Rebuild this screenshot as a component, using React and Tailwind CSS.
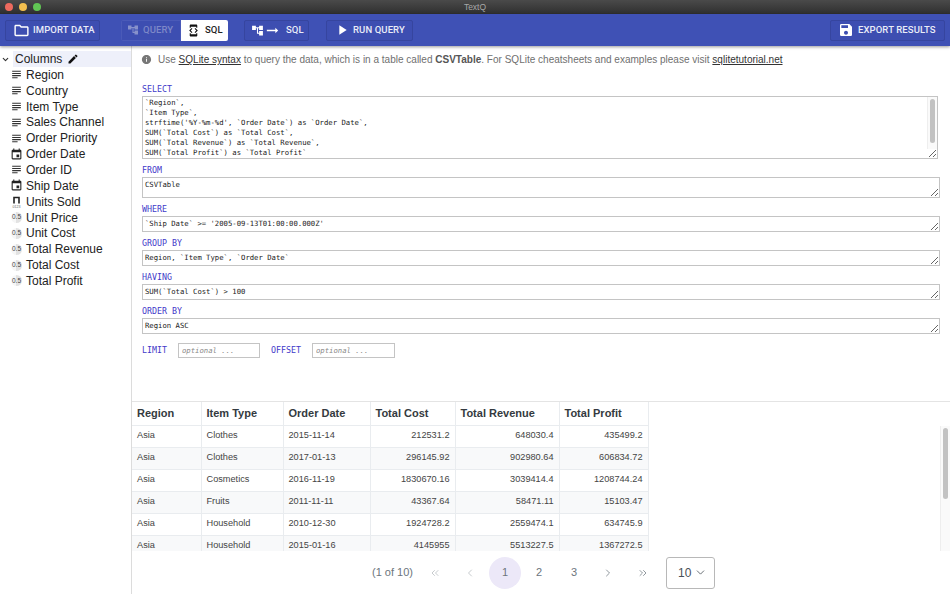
import React from "react";
import { ChevronDown, ChevronLeft, ChevronRight, ChevronsLeft, ChevronsRight } from "lucide-react";
import {
  MdAccountTree,
  MdArrowRightAlt,
  MdDeveloperMode,
  MdEdit,
  MdEvent,
  MdInfo,
  MdOutlineFolder,
  MdPlayArrow,
  MdSave,
  MdSubject,
} from "react-icons/md";

const columns = [
  { name: "Region", type: "text" },
  { name: "Country", type: "text" },
  { name: "Item Type", type: "text" },
  { name: "Sales Channel", type: "text" },
  { name: "Order Priority", type: "text" },
  { name: "Order Date", type: "date" },
  { name: "Order ID", type: "text" },
  { name: "Ship Date", type: "date" },
  { name: "Units Sold", type: "int" },
  { name: "Unit Price", type: "float" },
  { name: "Unit Cost", type: "float" },
  { name: "Total Revenue", type: "float" },
  { name: "Total Cost", type: "float" },
  { name: "Total Profit", type: "float" },
];

const rows = [
  ["Asia", "Clothes", "2015-11-14", "212531.2", "648030.4", "435499.2"],
  ["Asia", "Clothes", "2017-01-13", "296145.92", "902980.64", "606834.72"],
  ["Asia", "Cosmetics", "2016-11-19", "1830670.16", "3039414.4", "1208744.24"],
  ["Asia", "Fruits", "2011-11-11", "43367.64", "58471.11", "15103.47"],
  ["Asia", "Household", "2010-12-30", "1924728.2", "2559474.1", "634745.9"],
  ["Asia", "Household", "2015-01-16", "4145955", "5513227.5", "1367272.5"],
];

const selectSql = `\`Region\`,
\`Item Type\`,
strftime('%Y-%m-%d', \`Order Date\`) as \`Order Date\`,
SUM(\`Total Cost\`) as \`Total Cost\`,
SUM(\`Total Revenue\`) as \`Total Revenue\`,
SUM(\`Total Profit\`) as \`Total Profit\``;

const mono = "font-['DejaVu_Sans_Mono',monospace]";
const toolText = "font-['Roboto',sans-serif] text-[9.5px] font-medium tracking-[0.1px]";

const ColumnIcon = ({ type }) => {
  if (type === "date") return <MdEvent className="w-[13px] h-[13px] text-[#222]" />;
  if (type === "int") {
    return (
      <svg viewBox="0 0 13 13" className="w-[13px] h-[13px] text-[#222]">
        <path d="M4 8.5V2.5h5v6" fill="none" stroke="currentColor" strokeWidth="1.6" />
        <text x="6.5" y="12.8" textAnchor="middle" fontSize="3.6" fill="#666" fontFamily="Liberation Sans">0123</text>
      </svg>
    );
  }
  if (type === "float") {
    return (
      <span className="w-[11px] h-[11px] rounded-full bg-[linear-gradient(90deg,#f6f6f6_50%,#e2e2e2_50%)] flex items-center justify-center text-[6.5px] leading-none text-[#444]">
        0.5
      </span>
    );
  }
  return <MdSubject className="w-[13px] h-[13px] text-[#333]" />;
};

const ToolButton = ({ icon, children, className = "" }) => (
  <div className={`h-[21px] flex items-center whitespace-nowrap rounded-[2px] border border-[#36459f] bg-[#3d4eb1] text-[#e9ecf8] ${toolText} ${className}`}>
    {icon}
    {children}
  </div>
);

const SqlField = ({ label, rows: lineCount, value, heightClass, narrow }) => (
  <div>
    <div className={`h-[18px] pt-[4px] text-[8.3px] leading-[14px] text-[#3f39c9] ${mono}`}>{label}</div>
    <textarea
      readOnly
      rows={lineCount}
      value={value}
      className={`block ${narrow ? "w-[796px] py-[1px]" : "w-[798px] pt-[2px]"} ${heightClass} overflow-hidden bg-white border border-[#c4c4c4] px-[2px] text-[7.25px] leading-[10px] text-[#222] outline-none resize-y ${mono}`}
    />
  </div>
);

const PageButton = ({ children, className = "" }) => (
  <div className={`w-[32px] h-[32px] shrink-0 flex items-center justify-center rounded-full text-[#6c757d] ${className}`}>
    {children}
  </div>
);

const App = () => {
  return (
    <div className="w-[950px] h-[594px] flex flex-col overflow-hidden bg-white font-['Liberation_Sans',sans-serif]">
      {/* window title bar */}
      <div className="relative h-[14px] shrink-0 flex items-center justify-center bg-[linear-gradient(#4a4a4a,#2f2f2f)]">
        <div className="absolute left-[5px] top-[3px] flex gap-[6px]">
          <span className="w-[8px] h-[8px] rounded-full bg-[#ed6a5e]" />
          <span className="w-[8px] h-[8px] rounded-full bg-[#f4bf4f]" />
          <span className="w-[8px] h-[8px] rounded-full bg-[#61c554]" />
        </div>
        <span className="text-[8.5px] text-[#a8a8a8]">TextQ</span>
      </div>

      {/* toolbar */}
      <div className="relative z-10 h-[32px] shrink-0 flex items-center px-[5px] bg-[#3f51b5] shadow-[0_1px_3px_rgba(0,0,0,0.4)]">
        <ToolButton
          className="w-[95px] pl-[7px] gap-[3px]"
          icon={<MdOutlineFolder className="w-[17px] h-[17px] text-white" />}
        >
          IMPORT DATA
        </ToolButton>

        <div className="ml-[21px] h-[21px] flex rounded-[2px] overflow-hidden">
          <div className={`w-[60px] flex items-center pl-[5px] gap-[4px] border border-[#4a5ab8] bg-[#3d4eb1] text-[#7d88c8] ${toolText}`}>
            <MdAccountTree className="w-[12px] h-[12px] text-[#8791cb]" />
            QUERY
          </div>
          <div className={`w-[47px] flex items-center pl-[6px] gap-[5px] bg-white text-[#222] ${toolText}`}>
            <MdDeveloperMode className="w-[13px] h-[13px] text-[#111]" />
            SQL
          </div>
        </div>

        <ToolButton
          className="ml-[16px] w-[65px] pl-[6px]"
          icon={
            <span className="flex items-center mr-[5px]">
              <MdAccountTree className="w-[13px] h-[13px] text-white" />
              <MdArrowRightAlt className="w-[17px] h-[17px] text-white" />
            </span>
          }
        >
          SQL
        </ToolButton>

        <ToolButton
          className="ml-[17px] w-[87px] pl-[7px] gap-[3px]"
          icon={<MdPlayArrow className="w-[16px] h-[16px] text-white" />}
        >
          RUN QUERY
        </ToolButton>

        <ToolButton
          className="ml-auto w-[115px] pl-[7px] gap-[4px]"
          icon={<MdSave className="w-[16px] h-[16px] text-white" />}
        >
          EXPORT RESULTS
        </ToolButton>
      </div>

      <div className="flex-1 min-h-0 flex">
        {/* columns sidebar */}
        <div className="w-[132px] shrink-0 border-r border-[#dcdcdc] pt-[5px] text-[12px] text-[#222]">
          <div className="flex items-center h-[16px]">
            <ChevronDown className="w-[9px] h-[9px] ml-[1px] mr-[3px] text-[#333]" strokeWidth={3} />
            <div className="flex-1 h-[16px] flex items-center pl-[2px] gap-[5px] bg-[#eef0fa]">
              Columns
              <MdEdit className="w-[12px] h-[12px] text-[#111]" />
            </div>
          </div>
          {columns.map((col) => (
            <div key={col.name} className="flex items-center h-[15.85px] pl-[10px] gap-[3px]">
              <span className="w-[13px] flex justify-center">
                <ColumnIcon type={col.type} />
              </span>
              {col.name}
            </div>
          ))}
        </div>

        <div className="flex-1 min-w-0 flex flex-col">
          {/* query editor */}
          <div className="h-[355px] shrink-0 pl-[10px]">
            <div className="h-[26px] pt-[1px] flex items-center gap-[6px] text-[10.03px] text-[#6f6f6f]">
              <MdInfo className="ml-[-1px] w-[11px] h-[11px] text-[#777]" />
              <span>
                Use <span className="underline text-[#333]">SQLite syntax</span> to query the data, which is in a table called{" "}
                <span className="font-bold text-[#555]">CSVTable</span>. For SQLite cheatsheets and examples please visit{" "}
                <span className="underline text-[#333]">sqlitetutorial.net</span>
              </span>
            </div>

            <div className="relative mt-[6px]">
              <SqlField label="SELECT" rows={6} value={selectSql} heightClass="h-[63px]" narrow />
              <div className="absolute left-[785px] top-[19px] w-[10px] h-[52px] bg-[#fafafa] border-l border-[#eeeeee]">
                <div className="mx-auto mt-[2px] w-[5px] h-[44px] rounded-full bg-[#c2c2c2]" />
              </div>
            </div>
            <SqlField label="FROM" rows={2} value="CSVTable" heightClass="h-[21px]" />
            <SqlField label="WHERE" rows={1} value="`Ship Date` >= '2005-09-13T01:00:00.000Z'" heightClass="h-[16px]" />
            <SqlField label="GROUP BY" rows={1} value="Region, `Item Type`, `Order Date`" heightClass="h-[16px]" />
            <SqlField label="HAVING" rows={1} value="SUM(`Total Cost`) > 100" heightClass="h-[16px]" />
            <SqlField label="ORDER BY" rows={1} value="Region ASC" heightClass="h-[16px]" />

            <div className={`mt-[9px] flex items-center text-[8.3px] text-[#3f39c9] ${mono}`}>
              <span className="w-[36px]">LIMIT</span>
              <input
                readOnly
                placeholder="optional ..."
                className="w-[82px] h-[15px] border border-[#c4c4c4] px-[3px] text-[7.25px] italic outline-none placeholder:text-[#888]"
              />
              <span className="ml-[11px] w-[41px]">OFFSET</span>
              <input
                readOnly
                placeholder="optional ..."
                className="w-[83px] h-[15px] border border-[#c4c4c4] px-[3px] text-[7.25px] italic outline-none placeholder:text-[#888]"
              />
            </div>
          </div>

          {/* results */}
          <div className="relative h-[150px] shrink-0 overflow-hidden border-t border-[#e4e4e4]">
            <table className="table-fixed w-[516px] border-collapse">
              <colgroup>
                <col className="w-[69px]" />
                <col className="w-[82px]" />
                <col className="w-[87px]" />
                <col className="w-[85px]" />
                <col className="w-[104px]" />
                <col className="w-[89px]" />
              </colgroup>
              <thead>
                <tr className="h-[23px] text-left text-[11px] font-bold text-[#343a40] bg-white">
                  {["Region", "Item Type", "Order Date", "Total Cost", "Total Revenue", "Total Profit"].map((h) => (
                    <th key={h} className="px-[5px] border border-[#e9ecef] border-t-0 first:border-l-0 font-bold">{h}</th>
                  ))}
                </tr>
              </thead>
              <tbody>
                {rows.map((row, i) => (
                  <tr key={i} className={`h-[22px] text-[9.2px] text-[#444] ${i % 2 ? "bg-[#f8f9fa]" : "bg-white"}`}>
                    {row.map((cell, j) => (
                      <td key={j} className={`px-[5px] border border-[#e9ecef] first:border-l-0 ${j > 2 ? "text-right" : ""}`}>{cell}</td>
                    ))}
                  </tr>
                ))}
              </tbody>
            </table>
            <div className="absolute right-0 top-[24px] bottom-0 w-[10px] bg-[#fafafa] border-l border-[#eeeeee]">
              <div className="mx-auto mt-[2px] w-[5px] h-[71px] rounded-full bg-[#c2c2c2]" />
            </div>
          </div>

          {/* pagination */}
          <div className="flex-1 min-h-0 flex items-center pl-[240px] text-[11px] text-[#6c757d]">
            <span className="w-[47px]">(1 of 10)</span>
            <PageButton className="text-[#b4b9be]"><ChevronsLeft className="w-[12px] h-[12px]" strokeWidth={1.5} /></PageButton>
            <PageButton className="ml-[3px] text-[#b4b9be]"><ChevronLeft className="w-[12px] h-[12px]" strokeWidth={1.5} /></PageButton>
            <PageButton className="ml-[3px] bg-[#ece8f8] text-[#4f46b8]">1</PageButton>
            <PageButton className="ml-[2px]">2</PageButton>
            <PageButton className="ml-[3px]">3</PageButton>
            <PageButton className="ml-[2px]"><ChevronRight className="w-[12px] h-[12px]" strokeWidth={1.5} /></PageButton>
            <PageButton className="ml-[3px]"><ChevronsRight className="w-[12px] h-[12px]" strokeWidth={1.5} /></PageButton>
            <div className="ml-[7px] w-[49px] h-[32px] flex items-center justify-between pl-[11px] pr-[7px] rounded-[3px] border border-[#b8b8b8] text-[#495057] text-[12px]">
              10
              <ChevronDown className="w-[13px] h-[13px]" strokeWidth={1.5} />
            </div>
          </div>
        </div>
      </div>
    </div>
  );
};

export default App;
